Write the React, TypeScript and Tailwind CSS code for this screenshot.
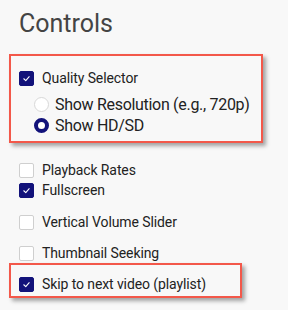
import React from "react";

const Check = ({ checked }: { checked: boolean }) => (
  <span
    className={
      "flex h-[15px] w-[15px] shrink-0 items-center justify-center rounded-[2px] border " +
      (checked ? "border-[#12127a] bg-[#12127a]" : "border-[#cfcfcf] bg-white")
    }
  >
    {checked && (
      <svg width="9" height="9" viewBox="0 0 10 10">
        <path d="M2 5.3 L4.2 7.3 L8 3" fill="none" stroke="white" strokeWidth="1.2" strokeLinecap="round" strokeLinejoin="round" />
      </svg>
    )}
  </span>
);

const Radio = ({ checked }: { checked: boolean }) => (
  <span
    className={
      "h-[15px] w-[15px] shrink-0 rounded-full " +
      (checked ? "border-[4px] border-[#12127a] bg-white" : "border border-[#d8d8d8] bg-white")
    }
  />
);

const Row = ({ checked, label, cls }: { checked: boolean; label: string; cls?: string }) => (
  <div className={"flex h-[18px] items-center gap-[8px] " + (cls || "")}>
    <Check checked={checked} />
    <span className="whitespace-nowrap text-[14px] leading-[18px] tracking-[-0.1px] text-[#222]">{label}</span>
  </div>
);

export default function App() {
  return (
    <div
      className="h-[310px] w-[288px] overflow-hidden bg-[#f8f8f8]"
      style={{ fontFamily: 'Roboto, sans-serif' }}
    >
      <h1 className="h-[40px] pl-[19px] pt-[8px] text-[25px] leading-[32px] text-[#444]">Controls</h1>
      <div className="ml-[9px] mt-[14px] w-[254px] border-2 border-[#f3584a] pb-[5px] pl-[8px] pt-[13px] shadow-[3px_3px_4px_rgba(0,0,0,0.35)]">
        <Row checked label="Quality Selector" />
        <div className="mt-[7px] flex flex-col pl-[15px]">
          <div className="flex h-[21px] items-center gap-[6px]">
            <Radio checked={false} />
            <span className="whitespace-nowrap text-[16px] leading-[21px] tracking-[-0.3px] text-[#222]">Show Resolution (e.g., 720p)</span>
          </div>
          <div className="flex h-[21px] items-center gap-[6px]">
            <Radio checked />
            <span className="whitespace-nowrap text-[16px] leading-[21px] tracking-[-0.3px] text-[#222]">Show HD/SD</span>
          </div>
        </div>
      </div>
      <div className="mt-[18px] flex flex-col pl-[19px]">
        <Row checked={false} label="Playback Rates" />
        <Row checked label="Fullscreen" cls="mt-[2px]" />
        <Row checked={false} label="Vertical Volume Slider" cls="mt-[14px]" />
        <Row checked={false} label="Thumbnail Seeking" cls="mt-[13px]" />
      </div>
      <div className="ml-[9px] mt-[1px] w-[233px] border-2 border-[#f3584a] pb-[3px] pl-[8px] pt-[10px] shadow-[3px_3px_4px_rgba(0,0,0,0.35)]">
        <Row checked label="Skip to next video (playlist)" />
      </div>
    </div>
  );
}
